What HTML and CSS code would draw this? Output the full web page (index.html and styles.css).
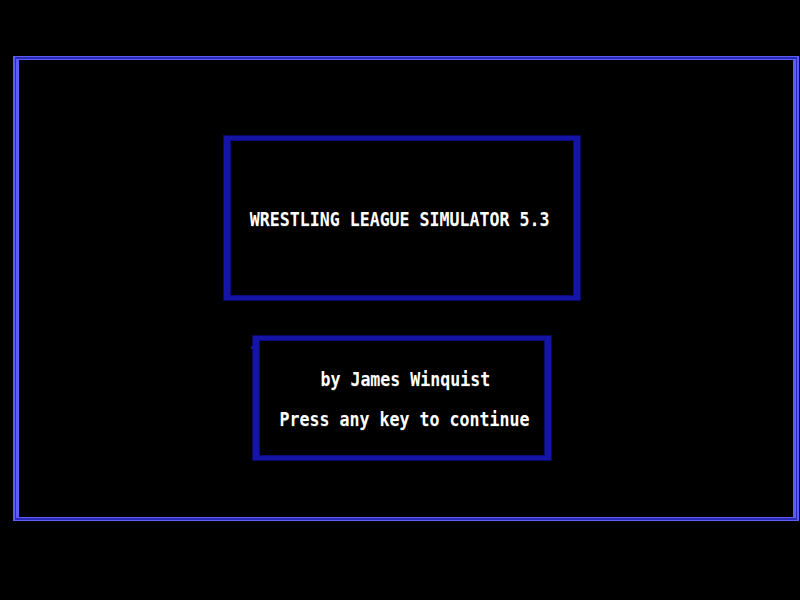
FILE: index.html
```html
<!DOCTYPE html>
<html lang="en">
<head>
<meta charset="utf-8">
<title>Wrestling League Simulator 5.3</title>
<link rel="stylesheet" href="styles.css">
</head>
<body>
  <div class="frame">
    <div class="frame-inner">
      <div class="panel panel-title">
        <span class="text">WRESTLING LEAGUE SIMULATOR 5.3</span>
      </div>
      <div class="panel panel-credits">
        <span class="text credit">by James Winquist</span>
        <span class="text prompt">Press any key to continue</span>
      </div>
    </div>
  </div>
</body>
</html>
```

FILE: styles.css
```css
html, body {
  margin: 0;
  padding: 0;
  background: #000;
  width: 800px;
  height: 600px;
  overflow: hidden;
}

/* outer double-line screen border */
.frame {
  margin: 56px 0 0 13px;
  width: 786px;
  height: 465px;
  box-sizing: border-box;
  border-style: solid;
  border-color: #5c5cf6;
  border-width: 1px 2px 1px 2px;
  padding: 2px 1px;
  background: #2a2ab4;
}

.frame-inner {
  height: 100%;
  box-sizing: border-box;
  border-style: solid;
  border-color: #5c5cf6;
  border-width: 1px 3px 1px 3px;
  background: #000;
  display: flex;
  flex-direction: column;
  align-items: center;
  padding-right: 8px;
}

/* thick blue dialog boxes */
.panel {
  box-sizing: border-box;
  border-style: solid;
  border-color: #1414a6;
  border-width: 4px 6px;
  box-shadow: inset 0 0 0 1px #0a0a78, 0 0 0 1px #080860;
  display: flex;
  flex-direction: column;
  align-items: center;
  justify-content: center;
  position: relative;
}

.panel-title {
  margin-top: 76px;
  width: 356px;
  height: 164px;
  padding: 3px 4px 0 0;
}

.panel-credits {
  margin-top: 36px;
  width: 298px;
  height: 124px;
  gap: 17px;
  padding: 2px 0 0 6px;
}

/* small tick on the left edge of the credits box */
.panel-credits::before {
  content: "";
  position: absolute;
  left: -8px;
  top: 6px;
  width: 5px;
  height: 3px;
  background: #1414a6;
}

.text {
  display: inline-block;
  font-family: "DejaVu Sans Mono", "Liberation Mono", monospace;
  font-weight: bold;
  font-size: 20px;
  line-height: 23px;
  color: #fff;
  white-space: pre;
  transform: scaleX(0.83);
  text-shadow: 0 1px 0 rgba(90, 90, 90, 0.35);
}
```
